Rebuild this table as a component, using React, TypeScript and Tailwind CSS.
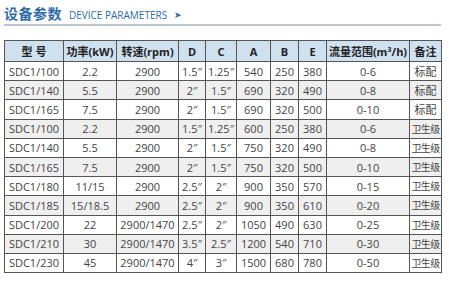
const cols = [
  { label: "型 号", w: "w-[59px]" },
  { label: "功率(kW)", w: "w-[53px]" },
  { label: "转速(rpm)", w: "w-[62px]" },
  { label: "D", w: "w-[27px]" },
  { label: "C", w: "w-[31px]" },
  { label: "A", w: "w-[34px]" },
  { label: "B", w: "w-[28px]" },
  { label: "E", w: "w-[28px]" },
  { label: "流量范围(m³/h)", w: "w-[83px]" },
  { label: "备注", w: "w-[32px]" },
];

const rows = [
  ["SDC1/100", "2.2", "2900", "1.5″", "1.25″", "540", "250", "380", "0-6", "标配"],
  ["SDC1/140", "5.5", "2900", "2″", "1.5″", "690", "320", "490", "0-8", "标配"],
  ["SDC1/165", "7.5", "2900", "2″", "1.5″", "690", "320", "500", "0-10", "标配"],
  ["SDC1/100", "2.2", "2900", "1.5″", "1.25″", "600", "250", "380", "0-6", "卫生级"],
  ["SDC1/140", "5.5", "2900", "2″", "1.5″", "750", "320", "490", "0-8", "卫生级"],
  ["SDC1/165", "7.5", "2900", "2″", "1.5″", "750", "320", "500", "0-10", "卫生级"],
  ["SDC1/180", "11/15", "2900", "2.5″", "2″", "900", "350", "570", "0-15", "卫生级"],
  ["SDC1/185", "15/18.5", "2900", "2.5″", "2″", "900", "350", "610", "0-20", "卫生级"],
  ["SDC1/200", "22", "2900/1470", "2.5″", "2″", "1050", "490", "630", "0-25", "卫生级"],
  ["SDC1/210", "30", "2900/1470", "3.5″", "2.5″", "1200", "540", "710", "0-30", "卫生级"],
  ["SDC1/230", "45", "2900/1470", "4″", "3″", "1500", "680", "780", "0-50", "卫生级"],
];

export default function App() {
  return (
    <div className="w-[449px] h-[284px] bg-white px-[4px] pt-[6px] font-['Open_Sans','Noto_Sans_CJK_SC',sans-serif]">
      {/* Title */}
      <div className="w-[437px] h-[20px] flex items-center gap-[7px] border-b-2 border-[#bcc5d3] pb-[3px]">
        <span className="text-[14px] font-bold leading-none text-[#2e6ba6] tracking-[0.5px]">设备参数</span>
        <span className="text-[10px] leading-none text-[#2e6ba6] mt-[2px]">DEVICE PARAMETERS</span>
        <span className="text-[9px] leading-none text-[#2e6ba6] mt-[2px]">➤</span>
      </div>

      <table className="mt-[14px] w-[437px] table-fixed border-collapse text-[11px] text-[#444]">
        <thead>
          <tr className="h-[21px] bg-[#cfe0ef]">
            {cols.map((c) => (
              <th
                key={c.label}
                className={`${c.w} border border-[#555] p-0 text-center font-bold text-[#222] whitespace-nowrap leading-none`}
              >
                {c.label}
              </th>
            ))}
          </tr>
        </thead>
        <tbody>
          {rows.map((r, i) => (
            <tr key={i} className={`h-[19.2px] ${i % 2 === 1 ? "bg-[#efefef]" : "bg-white"}`}>
              {r.map((v, j) => (
                <td
                  key={j}
                  className={`border border-[#555] p-0 text-center whitespace-nowrap leading-none ${
                    v === "卫生级" ? "text-[10px] tracking-[-0.6px]" : ""
                  }`}
                >
                  {v}
                </td>
              ))}
            </tr>
          ))}
        </tbody>
      </table>
    </div>
  );
}
